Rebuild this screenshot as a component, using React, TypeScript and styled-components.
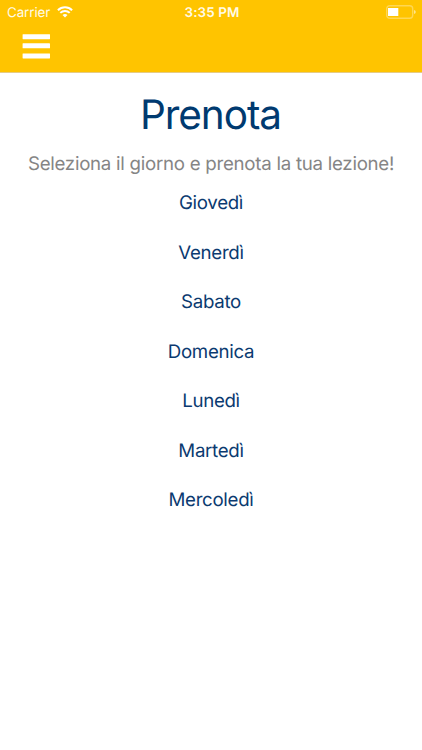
import React from "react";
import styled, { createGlobalStyle } from "styled-components";

const Global = createGlobalStyle`
  * { box-sizing: border-box; }
  body { margin: 0; background: #fff; font-family: Inter, "Liberation Sans", sans-serif; text-rendering: geometricPrecision; }
`;
const Screen = styled.div`
  width: 422px; height: 750px; background: #fff; display: flex; flex-direction: column; overflow: hidden;
`;
const TopBar = styled.header`
  height: 73px; flex: none; background: #ffc400; border-bottom: 1px solid #e5cb85;
`;
const StatusBar = styled.div`
  height: 24px; display: grid; grid-template-columns: 1fr auto 1fr; grid-template-rows: 24px; align-items: center;
  padding: 0 6px 0 7px; color: #fffbe8; font-size: 13.4px; line-height: 22px;
`;
const Carrier = styled.div`
  display: flex; align-items: center; gap: 7px; height: 24px; letter-spacing: -0.1px;
`;
const CarrierName = styled.span`
  height: 24px; padding-top: 2px;
`;
const Clock = styled.div`
  height: 24px; font-weight: 600; letter-spacing: 0.1px; padding: 2px 0 0 1px;
`;
const Battery = styled.svg`
  justify-self: end; display: block;
`;
const MenuButton = styled.button`
  display: block; margin: 10px 0 0 22px; padding: 0; border: 0; background: none; height: 26px;
`;
const Title = styled.h1`
  margin: 16px 0 0; font-size: 40.5px; line-height: 52px; font-weight: 400; text-align: center; color: #003a70;
  letter-spacing: -1.05px; padding-right: 1px;
`;
const Subtitle = styled.p`
  margin: 11px 0 0; font-size: 18.7px; line-height: 24px; text-align: center; color: #858585; white-space: nowrap;
  letter-spacing: -0.27px;
`;
const Days = styled.nav`
  display: flex; flex-direction: column; align-items: center; margin-top: 2px;
`;
const Day = styled.a`
  height: 49.5px; line-height: 49.5px; font-size: 18.7px; color: #0b3a70; letter-spacing: -0.3px;
`;
const days = ["Giovedì", "Venerdì", "Sabato", "Domenica", "Lunedì", "Martedì", "Mercoledì"];

export default function App() {
  return (
    <Screen>
      <Global />
      <TopBar>
        <StatusBar>
          <Carrier>
            <CarrierName>Carrier</CarrierName>
            <svg width="16" height="12" viewBox="0 0 16 12" fill="none" stroke="#fff" strokeWidth="2">
              <path d="M.9 4.2a10.2 10.2 0 0 1 14.2 0M3.3 6.9a6.7 6.7 0 0 1 9.4 0" />
              <path d="M8 11.6 5.5 9.1a3.6 3.6 0 0 1 5 0z" fill="#fff" stroke="none" />
            </svg>
          </Carrier>
          <Clock>3:35 PM</Clock>
          <Battery width="30" height="14" viewBox="0 0 30 14">
            <rect x=".7" y=".7" width="26" height="12.6" rx="3" fill="none" stroke="#fff" strokeOpacity=".32" strokeWidth="1.4" />
            <rect x="2" y="3" width="10.3" height="8" fill="#fff" />
            <path d="M28 5q1.8.4 1.8 2T28 9z" fill="#fff" fillOpacity=".55" />
          </Battery>
        </StatusBar>
        <MenuButton aria-label="Menu">
          <svg width="28" height="26" viewBox="0 0 28 26" fill="#fff">
            <rect x=".6" y=".2" width="27.4" height="5" rx=".4" />
            <rect x=".6" y="9.3" width="27.4" height="5" rx=".4" />
            <rect x=".6" y="19.4" width="27.4" height="5" rx=".4" />
          </svg>
        </MenuButton>
      </TopBar>
      <Title>Prenota</Title>
      <Subtitle>Seleziona il giorno e prenota la tua lezione!</Subtitle>
      <Days>{days.map(d => <Day key={d}>{d}</Day>)}</Days>
    </Screen>
  );
}
